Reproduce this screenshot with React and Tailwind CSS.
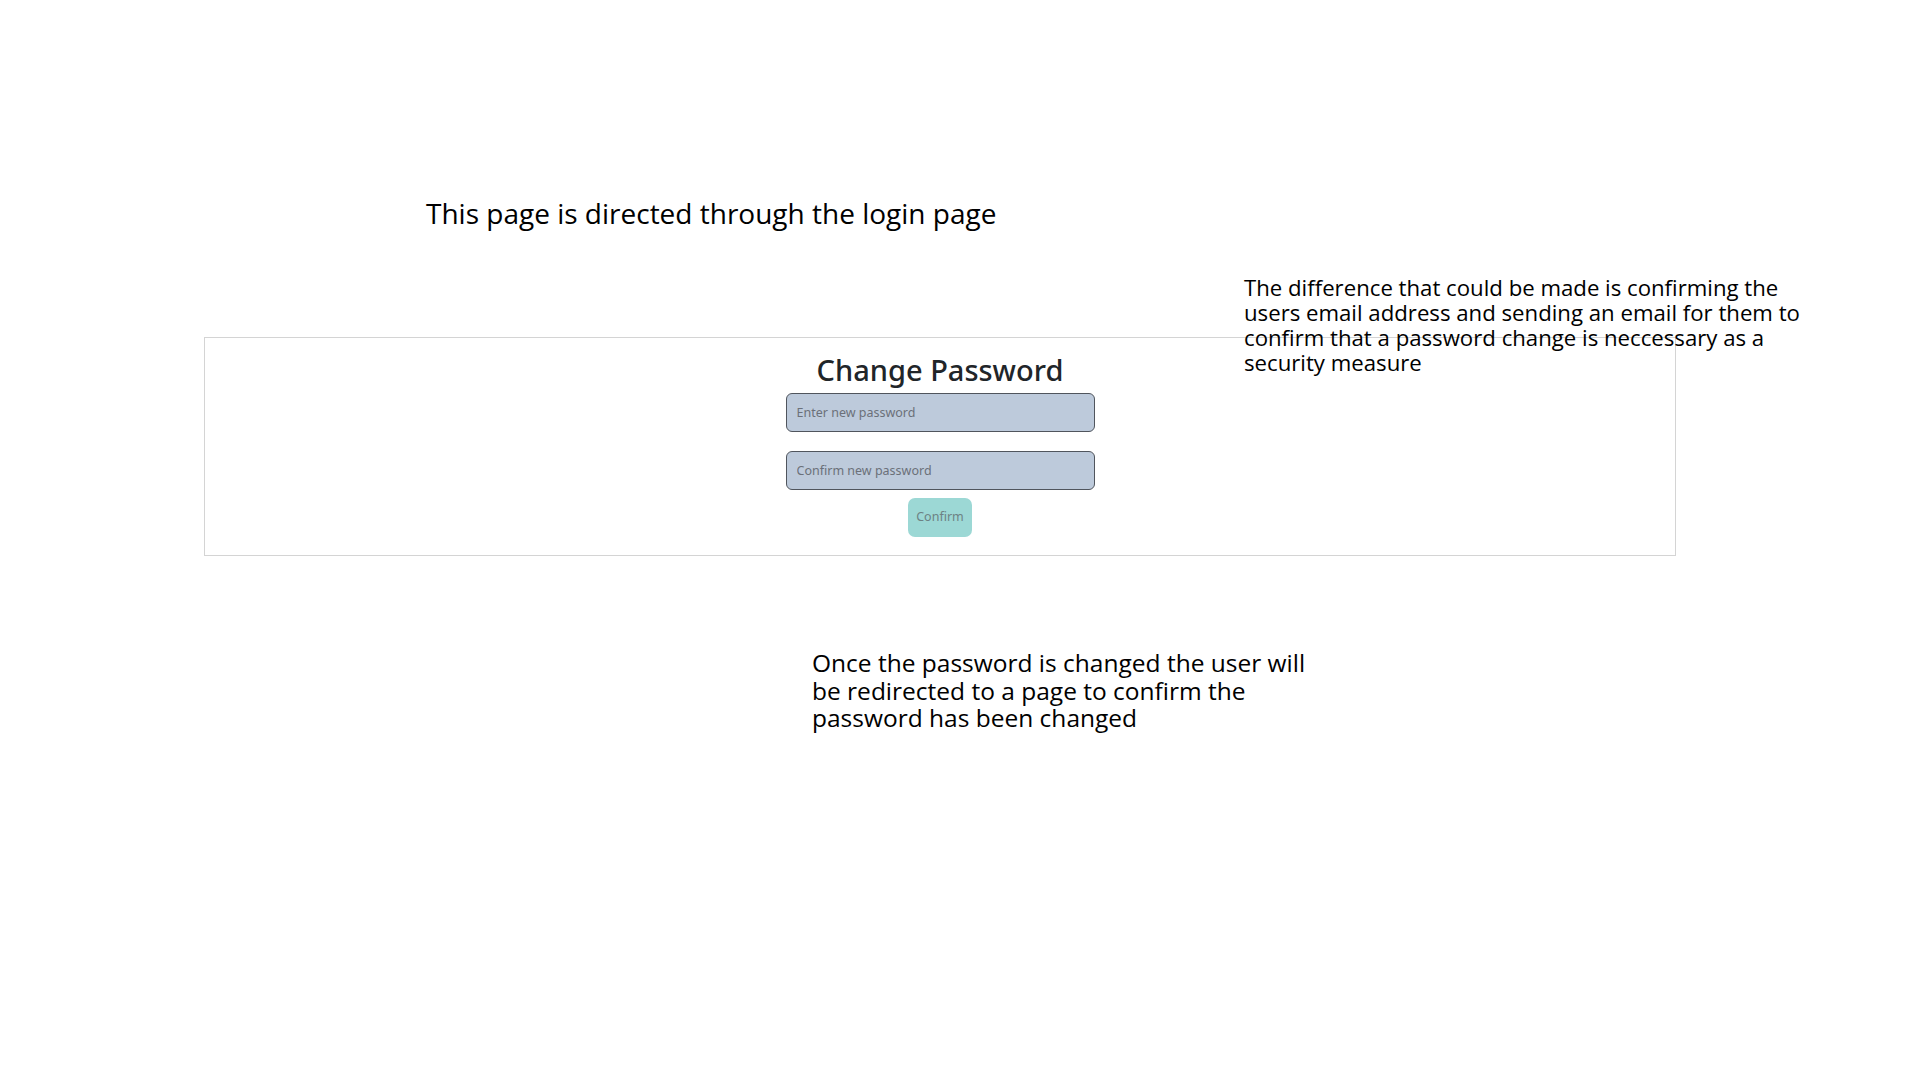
import React from 'react';

const slideFont = { fontFamily: '"Open Sans", "Liberation Sans", sans-serif' };

const Note = ({ lines, className }) => (
  <div className={className} style={slideFont}>
    {lines.map(line => (
      <div key={line} className="whitespace-nowrap">{line}</div>
    ))}
  </div>
);

const ChangePasswordShot = () => (
  <div className="ml-[204px] w-[1472px] h-[219px] border border-[#d4d4d4] bg-white flex flex-col items-center font-['Noto_Sans',sans-serif]">
    <h1 className="mt-[12px] text-[29px] leading-[40px] font-medium text-[#212529]">Change Password</h1>
    <input
      type="password"
      placeholder="Enter new password"
      className="mt-[3px] w-[309px] h-[39px] px-[10px] rounded-[6px] border-[1.5px] border-[#50555d] bg-[#bdcadb] text-[12.5px] placeholder:text-[#6b7079] outline-none"
    />
    <input
      type="password"
      placeholder="Confirm new password"
      className="mt-[19px] w-[309px] h-[39px] px-[10px] rounded-[6px] border-[1.5px] border-[#50555d] bg-[#bdcadb] text-[12.5px] placeholder:text-[#6b7079] outline-none"
    />
    <button className="mt-[8px] w-[64px] h-[39px] rounded-[7px] bg-[#9cd8d5] text-[12.5px] text-[#6d8284]">
      Confirm
    </button>
  </div>
);

export default function App() {
  return (
    <div className="relative w-[1920px] h-[1080px] bg-white text-black overflow-hidden">
      <Note
        className="pt-[195px] pl-[426px] h-[337px] text-[28px] leading-[36px]"
        lines={['This page is directed through the login page']}
      />

      <ChangePasswordShot />

      <Note
        className="mt-[93px] ml-[812px] text-[24.5px] leading-[27.5px]"
        lines={[
          'Once the password is changed the user will',
          'be redirected to a page to confirm the',
          'password has been changed',
        ]}
      />

      {/* annotation overlapping the screenshot */}
      <Note
        className="absolute left-[1244px] top-[275px] text-[22.2px] leading-[25px]"
        lines={[
          'The difference that could be made is confirming the',
          'users email address and sending an email for them to',
          'confirm that a password change is neccessary as a',
          'security measure',
        ]}
      />
    </div>
  );
}
